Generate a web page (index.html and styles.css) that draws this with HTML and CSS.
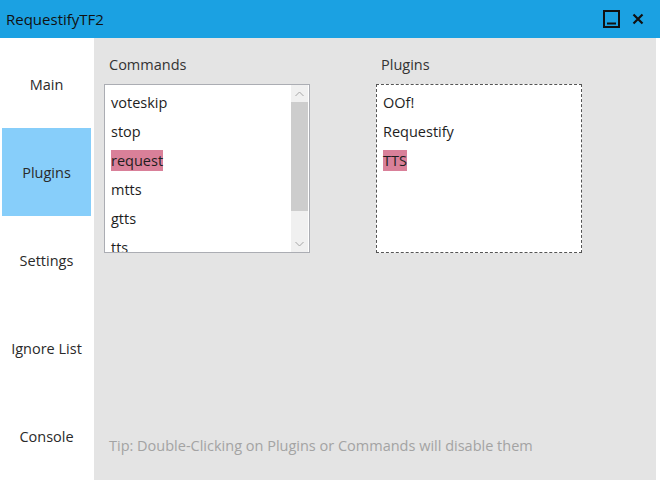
FILE: index.html
```html
<!DOCTYPE html>
<html>
<head>
<meta charset="utf-8">
<link rel="stylesheet" href="styles.css">
</head>
<body>
<div class="window">
  <header class="titlebar">
    <span class="title">RequestifyTF2</span>
    <div class="controls">
      <svg class="ctl" width="18" height="18" viewBox="0 0 18 18"><rect x="2" y="1" width="15" height="16" fill="none" stroke="#111" stroke-width="2"/><line x1="5" y1="13.5" x2="14" y2="13.5" stroke="#111" stroke-width="2"/></svg>
      <svg class="ctl" width="12" height="12" viewBox="0 0 12 12"><path d="M1.5 1.5 L10.5 10.5 M10.5 1.5 L1.5 10.5" stroke="#111" stroke-width="2.2" fill="none"/></svg>
    </div>
  </header>
  <div class="body">
    <nav class="sidebar">
      <div class="nav-item">Main</div>
      <div class="nav-item active">Plugins</div>
      <div class="nav-item">Settings</div>
      <div class="nav-item">Ignore List</div>
      <div class="nav-item">Console</div>
    </nav>
    <main class="content">
      <div class="columns">
        <section class="col">
          <div class="label">Commands</div>
          <div class="listbox">
            <ul class="items">
              <li><span>voteskip</span></li>
              <li><span>stop</span></li>
              <li><span class="hl">request</span></li>
              <li><span>mtts</span></li>
              <li><span>gtts</span></li>
              <li><span>tts</span></li>
            </ul>
            <div class="scrollbar">
              <div class="arrow">
                <svg width="9" height="6" viewBox="0 0 9 6"><path d="M0.5 5 L4.5 1 L8.5 5" stroke="#a6a6a6" fill="none" stroke-width="1"/></svg>
              </div>
              <div class="track"><div class="thumb"></div></div>
              <div class="arrow">
                <svg width="9" height="6" viewBox="0 0 9 6"><path d="M0.5 1 L4.5 5 L8.5 1" stroke="#a6a6a6" fill="none" stroke-width="1"/></svg>
              </div>
            </div>
          </div>
        </section>
        <section class="col">
          <div class="label">Plugins</div>
          <div class="listbox focus">
            <ul class="items">
              <li><span>OOf!</span></li>
              <li><span>Requestify</span></li>
              <li><span class="hl">TTS</span></li>
            </ul>
          </div>
        </section>
      </div>
      <p class="tip">Tip: Double-Clicking on Plugins or Commands will disable them</p>
    </main>
  </div>
</div>
</body>
</html>
```

FILE: styles.css
```css
* { box-sizing: border-box; }
html, body { margin: 0; padding: 0; }
body {
  width: 660px;
  height: 480px;
  background: #ffffff;
  font-family: "Open Sans", "Noto Sans", sans-serif;
  font-size: 14.5px;
  color: #1e1e1e;
  overflow: hidden;
}
.window { width: 660px; height: 480px; display: flex; flex-direction: column; }
.titlebar {
  height: 38px;
  background: #1ba1e2;
  display: flex;
  align-items: center;
  justify-content: space-between;
  padding: 0 16px 0 6px;
  flex: none;
}
.title { font-size: 15px; color: #111; }
.controls { display: flex; align-items: center; gap: 12px; }
.ctl { display: block; }
.body { flex: 1; display: flex; padding-bottom: 2px; }
.sidebar { width: 94px; flex: none; padding: 2px 3px 0 2px; display: flex; flex-direction: column; }
.nav-item {
  height: 88px;
  display: flex;
  align-items: center;
  justify-content: center;
  color: #2a2a2a;
  font-size: 14.5px;
}
.nav-item.active { background: #87cefa; }
.content {
  flex: 1;
  margin-right: 4px;
  background: #e4e4e4;
  padding: 17px 10px 0 10px;
  display: flex;
  flex-direction: column;
  justify-content: space-between;
}
.columns { display: flex; gap: 66px; }
.col { width: 206px; }
.label { padding-left: 5px; height: 29px; color: #333; }
.listbox {
  height: 169px;
  background: #fff;
  border: 1px solid #abadb3;
  display: flex;
  overflow: hidden;
}
.listbox.focus { border: 1px dashed #555; }
.items { list-style: none; margin: 0; padding: 3px 0 0 6px; flex: 1; }
.items li { height: 29px; line-height: 21px; padding-top: 4px; }
.items span { display: inline-block; height: 21px; }
.hl { background: #d98099; }
.scrollbar {
  width: 17px;
  flex: none;
  margin-right: 1px;
  background: #f0f0f0;
  display: flex;
  flex-direction: column;
}
.arrow { height: 17px; display: flex; align-items: center; justify-content: center; flex: none; }
.track { flex: 1; padding-bottom: 22px; }
.thumb { height: 109px; background: #cdcdcd; }
.tip { margin: 0 0 25px 5px; color: #a3a3a3; }
```
